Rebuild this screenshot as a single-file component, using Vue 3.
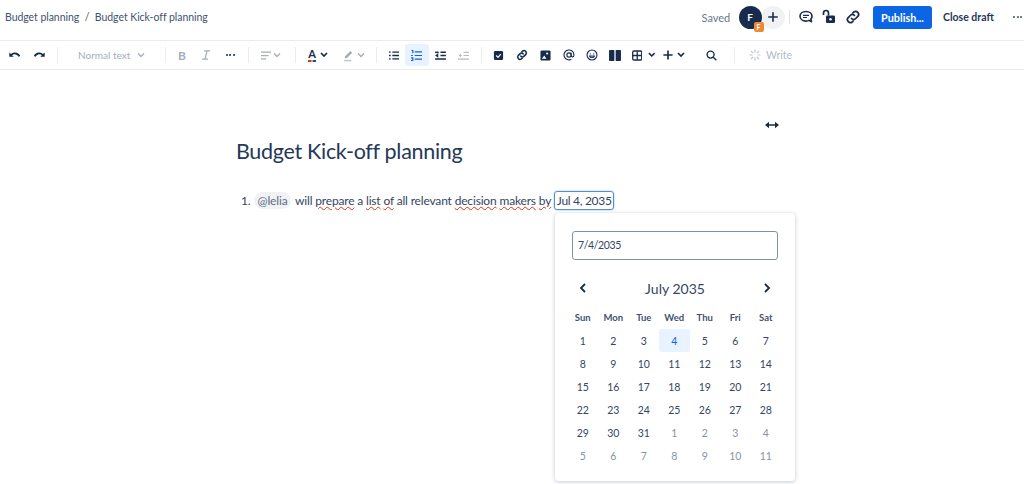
<script setup>
const weekdays = ['Sun', 'Mon', 'Tue', 'Wed', 'Thu', 'Fri', 'Sat']
const days = []
for (let i = 1; i <= 31; i++) days.push({ n: i, muted: false, selected: i === 4 })
for (let i = 1; i <= 11; i++) days.push({ n: i, muted: true, selected: false })
</script>

<template>
  <div class="page">
    <header class="top">
      <div class="crumbs"><span>Budget planning</span><span class="slash">/</span><span>Budget Kick-off planning</span></div>
      <div class="top-right">
        <span class="saved">Saved</span>
        <div class="avatars">
          <span class="avatar">F<span class="badge">F</span></span>
          <span class="invite"><svg width="10" height="10" viewBox="0 0 12 12"><path d="M6 1v10M1 6h10" stroke="#172b4d" stroke-width="1.900" stroke-linecap="round"/></svg></span>
        </div>
        <span class="vsep top-sep"></span>
        <svg class="ti" width="18" height="18" viewBox="0 0 18 18" fill="none"><path d="M9 3.500c-3.400 0-6 2.100-6 4.800s2.600 4.800 6 4.800c1.100 0 2.200-.2 3-.7l2.500 1.300-.6-2.700c.7-.8 1.100-1.700 1.100-2.700C15 5.600 12.400 3.500 9 3.500z" stroke="#172b4d" stroke-width="1.600" stroke-linejoin="round"/><path d="M6 7.300h6M6 9.500h4" stroke="#172b4d" stroke-width="1.200"/></svg>
        <svg class="ti" width="18" height="18" viewBox="0 0 18 18" fill="none"><path d="M3.500 7V5a2.500 2.500 0 0 1 5 0v2.500" stroke="#172b4d" stroke-width="1.700"/><rect x="6" y="7.500" width="9" height="7.500" rx="1.300" fill="#172b4d"/><circle cx="10.500" cy="11.200" r="1.200" fill="#fff"/></svg>
        <svg class="ti" width="18" height="18" viewBox="0 0 18 18" fill="none" stroke="#172b4d" stroke-width="1.700" stroke-linecap="round"><path d="M7.500 10.500a3 3 0 0 0 4.200 0l2.300-2.300A3 3 0 0 0 9.800 4L8.800 5"/><path d="M10.500 7.500a3 3 0 0 0-4.200 0L4 9.800A3 3 0 0 0 8.200 14l1-1"/></svg>
        <button class="publish">Publish...</button>
        <span class="close">Close draft</span>
        <span class="more">
          <i></i><i></i><i></i>
        </span>
      </div>
    </header>

    <nav class="tools">
      <span class="tb w24"><svg width="14" height="14" viewBox="0 0 16 16"><path d="M1.500 5v5h5L4.700 8.200c2.600-1.900 5.800-.9 7.300 1.900l2-1C12.200 5.300 7.800 3.800 3.500 6.900z" fill="#172b4d"/></svg></span>
      <span class="tb w24"><svg width="14" height="14" viewBox="0 0 16 16"><path d="M14.500 5v5h-5l1.800-1.800C8.700 6.300 5.500 7.300 4 10.100l-2-1C3.800 5.300 8.200 3.800 12.500 6.900z" fill="#172b4d"/></svg></span>
      <span class="sep s1"></span>
      <span class="style-btn">Normal text<svg class="chev" width="8" height="6" viewBox="0 0 8 6"><path d="M1 1.500l3 3 3-3" fill="none" stroke="#a5adba" stroke-width="1.400"/></svg></span>
      <span class="sep s2"></span>
      <span class="tb w24 dis bold">B</span>
      <span class="tb w24 dis ital"><svg width="10" height="10" viewBox="0 0 10 10"><path d="M3 .8h6M1 9.200h6M6 .8L4 9.200" fill="none" stroke="#a5adba" stroke-width="1.200"/></svg></span>
      <span class="tb w24"><span class="dots"><i></i><i></i><i></i></span></span>
      <span class="sep s3"></span>
      <span class="tb w34 dis"><svg width="10" height="9" viewBox="0 0 12 10"><path d="M0 1h12M0 5h9M0 9h6" stroke="#a5adba" stroke-width="1.500"/></svg><svg class="chev-tight" width="8" height="6" viewBox="0 0 8 6"><path d="M1 1.500l3 3 3-3" fill="none" stroke="#a5adba" stroke-width="1.400"/></svg></span>
      <span class="sep s4"></span>
      <span class="tb w34"><span class="color-a">A<span class="rainbow"></span></span><svg class="chev-in" width="8" height="6" viewBox="0 0 8 6"><path d="M1 1l3 3 3-3" fill="none" stroke="#172b4d" stroke-width="1.700"/></svg></span>
      <span class="tb w34 hl"><svg width="12" height="13" viewBox="0 0 13 14"><path d="M2 8l6-6 2 2-6 6H2z" fill="#a5adba"/><path d="M1 12.500h8" stroke="#c1c7d0" stroke-width="1.600"/></svg><svg class="chev-tight" width="8" height="6" viewBox="0 0 8 6"><path d="M1 1.500l3 3 3-3" fill="none" stroke="#a5adba" stroke-width="1.400"/></svg></span>
      <span class="sep s5"></span>
      <span class="tb w23"><svg width="10" height="9" viewBox="0 0 12 10"><path d="M4 1h8M4 5h8M4 9h8M0 1h2M0 5h2M0 9h2" stroke="#172b4d" stroke-width="1.600"/></svg></span>
      <span class="tb w23 active"><svg width="11" height="11" viewBox="0 0 12 12"><path d="M4 2h8M4 6h8M4 10h8M.5 .5h1.500v3M0 6h2M0 8.500h2v3H0" fill="none" stroke="#0c66e4" stroke-width="1.300"/></svg></span>
      <span class="tb w23"><svg width="11" height="9" viewBox="0 0 12 10"><path d="M6 1.500h6M6 5h6M0 9h12" stroke="#172b4d" stroke-width="1.700"/><path d="M0 5l3.500-2.500v5z" fill="#172b4d"/><path d="M0 1.500h4" stroke="#172b4d" stroke-width="1.700"/></svg></span>
      <span class="tb w23"><svg width="11" height="9" viewBox="0 0 12 10"><path d="M6 1.500h6M6 5h6M0 9h12M4 5H1" stroke="#b3bac5" stroke-width="1.300"/><path d="M2.500 3.300v3.400" stroke="#b3bac5" stroke-width="1.300"/></svg></span>
      <span class="sep s6"></span>
      <span class="tb w23"><svg width="11" height="11" viewBox="0 0 12 12"><rect x="1" y="1" width="10" height="10" rx="1.500" fill="#172b4d"/><path d="M3.500 6l2 2 3-3.500" fill="none" stroke="#fff" stroke-width="1.300"/></svg></span>
      <span class="tb w23"><svg width="14" height="14" viewBox="0 0 18 18" fill="none" stroke="#172b4d" stroke-width="2" stroke-linecap="round"><path d="M7.500 10.500a3 3 0 0 0 4.200 0l2.300-2.300A3 3 0 0 0 9.800 4L8.800 5"/><path d="M10.500 7.500a3 3 0 0 0-4.200 0L4 9.800A3 3 0 0 0 8.200 14l1-1"/></svg></span>
      <span class="tb w23"><svg width="11" height="11" viewBox="0 0 12 12"><rect x=".5" y=".5" width="11" height="11" rx="1.500" fill="#172b4d"/><circle cx="7.800" cy="3.800" r="1.200" fill="#fff"/><path d="M2 9.500l2.700-3.500 2.300 3.500z" fill="#fff"/></svg></span>
      <span class="tb w23"><svg width="12" height="12" viewBox="0 0 14 14" fill="none" stroke="#172b4d" stroke-width="1.300"><circle cx="7" cy="7" r="2.500"/><path d="M9.500 4.500v3.300c0 2 3.300 2 3.300-.8A5.800 5.800 0 1 0 9.800 12"/></svg></span>
      <span class="tb w23"><svg width="12" height="12" viewBox="0 0 14 14" fill="none" stroke="#172b4d" stroke-width="1.300"><circle cx="7" cy="7" r="5.800"/><circle cx="5" cy="5.800" r=".7" fill="#172b4d" stroke="none"/><circle cx="9" cy="5.800" r=".7" fill="#172b4d" stroke="none"/><path d="M4.200 8.200h5.600c-.5 2.300-5.100 2.300-5.600 0z" fill="none"/></svg></span>
      <span class="tb w23"><svg width="12" height="11" viewBox="0 0 13 12"><rect x="0" y="0" width="5.800" height="12" rx=".8" fill="#172b4d"/><rect x="7.200" y="0" width="5.800" height="12" rx=".8" fill="#172b4d"/></svg></span>
      <span class="tb wtable"><svg width="11" height="11" viewBox="0 0 12 12" fill="none" stroke="#172b4d" stroke-width="1.500"><rect x=".8" y=".8" width="10.400" height="10.400" rx="1.500"/><path d="M6 1v10M1 6h10"/></svg><svg class="chev-table" width="8" height="6" viewBox="0 0 8 6"><path d="M1 1l3 3 3-3" fill="none" stroke="#172b4d" stroke-width="1.700"/></svg></span>
      <span class="tb wplus"><svg width="10" height="10" viewBox="0 0 12 12"><path d="M6 .5v11M.5 6h11" stroke="#172b4d" stroke-width="2"/></svg><svg class="chev-in" width="8" height="6" viewBox="0 0 8 6"><path d="M1 1l3 3 3-3" fill="none" stroke="#172b4d" stroke-width="1.700"/></svg></span>
      <span class="tb wsearch"><svg width="11" height="11" viewBox="0 0 12 12" fill="none" stroke="#172b4d" stroke-width="1.500"><circle cx="5" cy="5" r="3.800"/><path d="M8 8l3.300 3.300"/></svg></span>
      <span class="sep s7"></span>
      <span class="write"><svg width="12" height="12" viewBox="0 0 12 12" stroke="#c1c7d0" stroke-width="1.200"><path d="M6 .5v3M6 8.500v3M.5 6h3M8.500 6h3M2 2l2.200 2.200M10 2L7.800 4.200M2 10l2.200-2.200M10 10L7.800 7.800"/></svg>Write</span>
    </nav>

    <main class="editor">
      <div class="expand"><svg width="14" height="8" viewBox="0 0 14 8"><path d="M2 4h10" stroke="#172b4d" stroke-width="1.500"/><path d="M0 4l4-3.300v6.600zM14 4l-4-3.300v6.600z" fill="#172b4d"/></svg></div>
      <h1>Budget Kick-off planning</h1>
      <div class="line">
        <span class="num">1.</span>
        <span class="mention">@lelia</span>
        <span class="sentence">will <u>prepare</u> a <u>list</u> <u>of</u> all relevant <u>decision</u> <u>makers</u> <u>by</u></span>
        <span class="date">Jul 4, 2035</span>
      </div>

      <section class="picker">
        <div class="field">7/4/2035</div>
        <div class="month">
          <svg width="8" height="10" viewBox="0 0 8 10"><path d="M6 1L2 5l4 4" fill="none" stroke="#172b4d" stroke-width="1.800"/></svg>
          <span class="month-name">July 2035</span>
          <svg width="8" height="10" viewBox="0 0 8 10"><path d="M2 1l4 4-4 4" fill="none" stroke="#172b4d" stroke-width="1.800"/></svg>
        </div>
        <div class="grid">
          <span v-for="d in weekdays" :key="d" class="wd">{{ d }}</span>
          <span v-for="(d, i) in days" :key="i" class="day" :class="{ muted: d.muted, selected: d.selected }">{{ d.n }}</span>
        </div>
      </section>
    </main>
  </div>
</template>

<style>
html, body { background: #fff; margin: 0; }
</style>

<style scoped>
.page { width: 1024px; height: 484px; overflow: hidden; font-family: Lato, "Noto Sans", sans-serif; color: #172b4d; background: #fff; display: flex; flex-direction: column; }
.top { height: 40px; box-sizing: border-box; display: flex; align-items: center; justify-content: space-between; padding: 0 0 6px 5px; }
.crumbs { font-size: 10.500px; letter-spacing: -.05px; color: #42526e; display: flex; gap: 5.500px; }
.top-right { display: flex; align-items: center; }
.saved { font-size: 11px; color: #6b778c; width: 37px; }
.avatars { display: flex; }
.avatar { width: 23px; height: 23px; border-radius: 50%; background: #172b4d; color: #fff; font-size: 10px; font-weight: 700; display: flex; align-items: center; justify-content: center; position: relative; z-index: 1; }
.badge { position: absolute; right: -2px; bottom: -3px; width: 10px; height: 10px; background: #ec8a33; color: #fff; font-size: 7px; line-height: 10px; text-align: center; border-radius: 2px; }
.invite { width: 24px; height: 23px; border-radius: 50%; background: #f1f2f4; display: flex; align-items: center; justify-content: center; margin-left: -1px; }
.vsep { width: 1px; height: 14px; background: #dfe1e6; }
.top-sep { margin: 0 7px 0 4px; }
.ti { margin-right: 5.500px; }
.publish { width: 59px; height: 23px; background: #0c66e4; color: #fff; border: 0; border-radius: 3px; font: 700 10.800px Lato, sans-serif; padding: 0; margin-left: 6px; }
.close { font-size: 10.500px; font-weight: 700; color: #253858; margin-left: 11px; width: 51px; white-space: nowrap; }
.more { display: flex; gap: 1.500px; margin-left: 19px; margin-right: 2px; }
.more i, .dots i { width: 2px; height: 2px; background: #42526e; border-radius: 50%; display: block; }
.tools { height: 30px; box-sizing: border-box; border-top: 1px solid #ebecf0; border-bottom: 1px solid #ebecf0; display: flex; align-items: center; padding-left: 3px; }
.tb { height: 22px; display: flex; align-items: center; justify-content: center; flex: none; border-radius: 3px; }
.w24 { width: 24px; }
.w23 { width: 23.300px; }
.w34 { width: 34px; }
.wtable { width: 29px; justify-content: flex-start; padding-left: 5px; box-sizing: border-box; }
.wplus { width: 26px; margin-left: 5px; }
.wsearch { width: 24px; margin-left: 13px; }
.chev-table { margin-left: 6px; }
.chev-in { margin-left: 4px; }
.chev-tight { margin-left: 2px; }
.active { background: #e9f2ff; }
.sep { width: 1px; height: 16px; background: #ebecf0; flex: none; }
.s1 { margin: 0 12px 0 6px; }
.s2 { margin: 0 4px 0 10px; }
.s3 { margin: 0 5px 0 6px; }
.s4 { margin: 0 5px 0 7px; }
.s5 { margin: 0 5px 0 5px; }
.s6 { margin: 0 5px 0 6px; }
.s7 { margin: 0 14px 0 10px; }
.style-btn { font-size: 10px; color: #a5adba; width: 85px; padding-left: 8px; padding-bottom: 1px; box-sizing: border-box; display: flex; align-items: center; white-space: nowrap; }
.style-btn .chev { margin-left: 7px; }
.dis { color: #a5adba; }
.bold { font: 700 12px Lato, sans-serif; }
.dots { display: flex; gap: 1.500px; }
.dots i { background: #172b4d; }
.hl { margin-left: 2px; }
.color-a { font-size: 11px; font-weight: 700; line-height: 11px; display: inline-block; position: relative; padding-bottom: 3px; }
.rainbow { position: absolute; left: 0; right: 0; bottom: 0; height: 2.500px; background: linear-gradient(90deg, #de350b 0 33%, #ff991f 33% 66%, #0052cc 66%); }
.write { font-size: 10.500px; color: #b3bac5; display: flex; align-items: center; gap: 5px; padding-bottom: 1px; }
.editor { position: relative; flex: 1; padding: 0 0 0 236px; }
.expand { width: 544px; height: 17px; padding-top: 51px; display: flex; justify-content: flex-end; align-items: flex-start; margin-left: -1px; }
h1 { font-size: 21.500px; letter-spacing: -.3px; line-height: 30px; font-weight: 400; margin: -2px 0 0 0; color: #253858; }
.line { display: flex; align-items: center; font-size: 12px; letter-spacing: -.17px; color: #344563; margin-top: 24px; height: 20px; white-space: nowrap; }
.num { margin-left: 5px; width: 13px; }
.mention { height: 17px; line-height: 17px; padding: 0 3px; background: #f1f2f4; color: #5e6c84; border-radius: 9px; width: 37px; box-sizing: border-box; text-align: center; }
.sentence { margin-left: 4px; }
u { text-decoration: underline wavy #de350b; text-decoration-thickness: 1px; text-underline-offset: 1px; }
.date { margin-left: 3px; height: 19px; line-height: 17px; width: 60px; text-align: center; letter-spacing: -.3px; box-sizing: border-box; border: 1px solid #5a8fc7; border-radius: 3px; box-shadow: 0 0 0 .5px #b3d4ff; }
.picker { position: absolute; left: 555px; top: 143px; width: 240px; height: 268px; box-sizing: border-box; padding: 18px 17px 0; background: #fff; border-radius: 3px; box-shadow: 0 1px 4px rgba(9, 30, 66, .22), 0 0 1px rgba(9, 30, 66, .15); }
.field { height: 29px; box-sizing: border-box; border: 1px solid #8590a2; border-radius: 3px; font-size: 10.500px; letter-spacing: -.4px; line-height: 26px; padding-left: 5px; color: #344563; width: 206px; }
.month { display: flex; justify-content: space-between; align-items: center; margin: 18px 7px 0 7px; height: 20px; font-size: 14px; color: #344563; }
.month-name { padding-top: 1px; }
.grid { display: grid; grid-template-columns: repeat(7, 30.500px); grid-auto-rows: 23px; margin: 8px 0 0 -4.500px; }
.wd { font-size: 9.500px; font-weight: 700; color: #42526e; text-align: center; line-height: 24px; }
.day { font-size: 10.500px; color: #344563; display: flex; align-items: center; justify-content: center; border-radius: 2px; padding-top: 1px; box-sizing: border-box; }
.muted { color: #8993a4; }
.selected { background: #e9f2ff; color: #0c66e4; }
</style>
